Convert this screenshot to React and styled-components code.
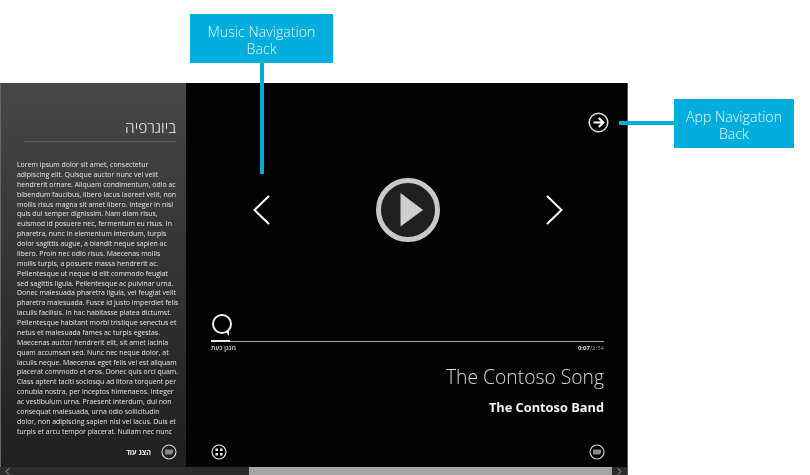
import React from "react";
import styled, { createGlobalStyle } from "styled-components";

const Global = createGlobalStyle`
  html, body { margin: 0; padding: 0; background: #fff; overflow: hidden; }
  body { font-family: "Open Sans", "Noto Sans", sans-serif; }
`;

const Page = styled.div`
  position: relative;
  width: 810px;
  height: 475px;
  padding-top: 83px;
  box-sizing: border-box;
  background: #fff;
`;

const Frame = styled.div`
  width: 628px;
  height: 392px;
  display: flex;
  flex-direction: column;
  background: #000;
  box-sizing: border-box;
  border-right: 1px solid #555;
  will-change: transform;
`;

const Body = styled.div`
  flex: 1;
  display: flex;
  min-height: 0;
`;

const Side = styled.aside`
  width: 186px;
  flex: none;
  box-sizing: border-box;
  border-left: 1px solid #666;
  background: linear-gradient(#474749, #1f1f20);
  padding: 34px 10px 0 16px;
  display: flex;
  flex-direction: column;
  color: #eee;
`;

const SideTitle = styled.h2`
  margin: 0 0 0 7px;
  padding: 0 0 4px;
  font: 300 15.5px/20px "Open Sans", "Noto Sans", sans-serif;
  text-align: right;
  direction: rtl;
  color: #e8e8e8;
  border-bottom: 1px solid #5c5c5e;
`;

const Bio = styled.div`
  margin-top: 18px;
  font-size: 6.95px;
  line-height: 9.87px;
  color: #e6e6e6;
  white-space: nowrap;
`;

const More = styled.div`
  margin: 7px -1px 0 0;
  display: flex;
  justify-content: flex-end;
  align-items: center;
  gap: 10px;
  font-size: 7.2px;
  font-weight: 700;
  color: #eee;
`;

const Main = styled.main`
  flex: 1;
  min-width: 0;
  display: flex;
  flex-direction: column;
  padding: 29px 23px 0 25px;
  box-sizing: border-box;
  background: #030303;
  color: #fff;
`;

const TopBar = styled.div`
  display: flex;
  justify-content: flex-end;
  height: 21px;
  margin-right: -5px;
`;

const Transport = styled.div`
  margin-top: 44px;
  height: 66px;
  display: flex;
  align-items: center;
  justify-content: center;
  gap: 105px;
`;

const Progress = styled.div`
  margin-top: 70px;
  display: flex;
  flex-direction: column;
`;

const Line = styled.div`
  height: 1px;
  margin-top: 4px;
  background: #a8a8a8;
  display: flex;
`;

const Played = styled.div`
  width: 19px;
  height: 2px;
  margin-top: -1px;
  background: #e6e6e6;
`;

const Labels = styled.div`
  display: flex;
  justify-content: space-between;
  align-items: center;
  margin-top: 1px;
  height: 9px;
  font-size: 6px;
  color: #ccc;
`;

const Now = styled.span`
  font-weight: 600;
  font-size: 6.5px;
  color: #ddd;
`;

const Time = styled.span`
  color: #999;
  b { color: #ddd; font-weight: 700; }
`;

const Song = styled.div`
  margin-top: 13px;
  font-weight: 300;
  font-size: 19.3px;
  line-height: 24px;
  text-align: right;
  color: #d8d8d8;
`;

const Band = styled.div`
  margin-top: 10px;
  font-weight: 700;
  font-size: 12.8px;
  line-height: 16px;
  text-align: right;
  color: #f4f4f4;
`;

const BottomBar = styled.div`
  margin-top: 29px;
  display: flex;
  justify-content: space-between;
  align-items: center;
  margin-right: -1px;
`;

const Scrollbar = styled.div`
  height: 8px;
  flex: none;
  background: #2c2c2c;
  display: flex;
  align-items: center;
  justify-content: space-between;
  padding: 0 5px;
  box-sizing: border-box;
`;

const Thumb = styled.div`
  width: 363px;
  height: 8px;
  margin: 0 2px 0 236px;
  background: #a6a6a6;
`;

const Callout = styled.div`
  position: absolute;
  left: ${p => p.$x}px;
  top: ${p => p.$y}px;
  width: ${p => p.$w}px;
  height: 49px;
  padding-top: 2px;
  box-sizing: border-box;
  background: #00addd;
  color: #eaf8fc;
  font-size: 14.2px;
  font-weight: 300;
  line-height: 17px;
  text-align: center;
  display: flex;
  align-items: center;
  justify-content: center;
  will-change: transform;
`;

const VLeader = styled.div`
  position: absolute;
  left: 260px;
  top: 63px;
  width: 4px;
  height: 111px;
  background: #00addd;
`;

const HLeader = styled.div`
  position: absolute;
  left: 619px;
  top: 121px;
  width: 55px;
  height: 4px;
  background: #00addd;
`;

const Chevron = ({ dir }) => (
  <svg width="18" height="30" viewBox="0 0 18 30" fill="none">
    <path d={dir === "left" ? "M17 1 L2.5 15 L17 29" : "M1 1 L15.5 15 L1 29"} stroke="#fff" strokeWidth="2" />
  </svg>
);

const Play = () => (
  <svg width="66" height="66" viewBox="0 0 66 66">
    <circle cx="33" cy="33" r="29.5" fill="#202020" stroke="#c9c9c9" strokeWidth="5" />
    <path d="M25.5 16 L48 33 L25.5 49.5 Z" fill="#cfcfcf" />
  </svg>
);

const BackArrow = () => (
  <svg width="21" height="21" viewBox="0 0 21 21" fill="none">
    <circle cx="10.5" cy="10.5" r="9.3" stroke="#ddd" strokeWidth="1.5" />
    <path d="M5.5 10.5 H14.5 M10.8 6 L15.3 10.5 L10.8 15" stroke="#fff" strokeWidth="2.2" />
  </svg>
);

const Bubble = () => (
  <svg width="22" height="24" viewBox="0 0 22 24" fill="none">
    <circle cx="11" cy="11" r="9" stroke="#f2f2f2" strokeWidth="2" />
    <path d="M15 19 L18 23 L18 16.5 Z" fill="#f2f2f2" />
  </svg>
);

const GridIcon = () => (
  <svg width="16" height="16" viewBox="0 0 16 16" fill="none">
    <circle cx="8" cy="8" r="7" stroke="#eee" strokeWidth="1.1" />
    <g fill="#eee">
      <rect x="4.5" y="4.5" width="2.5" height="2.5" />
      <rect x="9" y="4.5" width="2.5" height="2.5" />
      <rect x="4.5" y="9" width="2.5" height="2.5" />
      <rect x="9" y="9" width="2.5" height="2.5" />
    </g>
  </svg>
);

const ListIcon = () => (
  <svg width="16" height="16" viewBox="0 0 16 16" fill="none">
    <circle cx="8" cy="8" r="7" stroke="#ddd" strokeWidth="1.1" />
    <path d="M4 5.5 H12 V9 L10.5 10.5 H4 Z" fill="#8a8a8a" />
  </svg>
);

const ScrollArrow = ({ dir }) => (
  <svg width="5" height="7" viewBox="0 0 5 7" fill="none">
    <path d={dir === "left" ? "M4 .5 L1 3.5 L4 6.5" : "M1 .5 L4 3.5 L1 6.5"} stroke="#aaa" />
  </svg>
);

const bio = [
  "Lorem ipsum dolor sit amet, consectetur",
  "adipiscing elit. Quisque auctor nunc vel velit",
  "hendrerit ornare. Aliquam condimentum, odio ac",
  "bibendum faucibus, libero lacus laoreet velit, non",
  "mollis risus magna sit amet libero. Integer in nisi",
  "quis dui semper dignissim. Nam diam risus,",
  "euismod id posuere nec, fermentum eu risus. In",
  "pharetra, nunc in elementum interdum, turpis",
  "dolor sagittis augue, a blandit neque sapien ac",
  "libero. Proin nec odio risus. Maecenas mollis",
  "mollis turpis, a posuere massa hendrerit ac.",
  "Pellentesque ut neque id elit commodo feugiat",
  "sed sagittis ligula. Pellentesque ac pulvinar urna.",
  "Donec malesuada pharetra ligula, vel feugiat velit",
  "pharetra malesuada. Fusce id justo imperdiet felis",
  "iaculis facilisis. In hac habitasse platea dictumst.",
  "Pellentesque habitant morbi tristique senectus et",
  "netus et malesuada fames ac turpis egestas.",
  "Maecenas auctor hendrerit elit, sit amet lacinia",
  "quam accumsan sed. Nunc nec neque dolor, at",
  "iaculis neque. Maecenas eget felis vel est aliquam",
  "placerat commodo et eros. Donec quis orci quam.",
  "Class aptent taciti sociosqu ad litora torquent per",
  "conubia nostra, per inceptos himenaeos. Integer",
  "ac vestibulum urna. Praesent interdum, dui non",
  "consequat malesuada, urna odio sollicitudin",
  "dolor, non adipiscing sapien nisl vel lacus. Duis et",
  "turpis et arcu tempor placerat. Nullam nec nunc",
];

export default function App() {
  return (
    <Page>
      <Global />
      <Frame>
        <Body>
          <Side>
            <SideTitle>ביוגרפיה</SideTitle>
            <Bio>{bio.map(l => <div key={l}>{l}</div>)}</Bio>
            <More><span dir="rtl">הצג עוד</span><ListIcon /></More>
          </Side>
          <Main>
            <TopBar><BackArrow /></TopBar>
            <Transport>
              <Chevron dir="left" />
              <Play />
              <Chevron dir="right" />
            </Transport>
            <Progress>
              <Bubble />
              <Line><Played /></Line>
              <Labels>
                <Now dir="rtl">מנגן כעת</Now>
                <Time><b>0:07</b>/2:54</Time>
              </Labels>
            </Progress>
            <Song>The Contoso Song</Song>
            <Band>The Contoso Band</Band>
            <BottomBar><GridIcon /><ListIcon /></BottomBar>
          </Main>
        </Body>
        <Scrollbar>
          <ScrollArrow dir="left" />
          <Thumb />
          <ScrollArrow dir="right" />
        </Scrollbar>
      </Frame>
      <Callout $x={190} $y={14} $w={143}>Music Navigation<br />Back</Callout>
      <VLeader />
      <HLeader />
      <Callout $x={674} $y={99} $w={120}>App Navigation<br />Back</Callout>
    </Page>
  );
}
